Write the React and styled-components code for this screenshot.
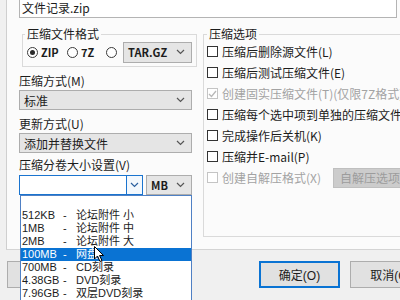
import React from "react";
import styled, { createGlobalStyle } from "styled-components";

const Global = createGlobalStyle`
  html, body { margin: 0; padding: 0; background: #f0f0f0; }
  body { font-family: "Noto Sans CJK SC", "Noto Sans", sans-serif; font-size: 12px; color: #1c1c1c; }
  * { box-sizing: border-box; }
`;

const Root = styled.div`
  width: 400px;
  height: 300px;
  overflow: hidden;
  background: #f0f0f0;
  display: flex;
  flex-direction: column;
`;

const Page = styled.div`
  margin-left: 6px;
  height: 250px;
  flex: none;
  background: #fbfbfb;
  border-left: 1px solid #cfcfcf;
  border-bottom: 1px solid #d4d4d4;
  padding: 0 3px 0 12px;
  display: flex;
  flex-direction: column;
`;

const NameField = styled.div`
  height: 18px;
  background: #fff;
  border: 1px solid #b4b4b4;
  border-top: none;
  padding-left: 2px;
  line-height: 16px;
  white-space: nowrap;
`;

const Columns = styled.div`
  margin-top: 9px;
  display: flex;
  gap: 6px;
`;

const LeftCol = styled.div`
  position: relative;
  width: 178px;
  flex: none;
  display: flex;
  flex-direction: column;
`;

const Group = styled.fieldset`
  margin: 0 0 0 ${(p) => p.$indent || 0}px;
  padding: 0 0 ${(p) => p.$pb || 0}px 2px;
  border: 1px solid #dadada;
  min-width: 0;
  width: ${(p) => p.$w}px;
  height: ${(p) => (p.$h ? p.$h + "px" : "auto")};
  flex: none;
`;

const Legend = styled.legend`
  padding: 0 2px;
  margin: 0;
  line-height: 14px;
  height: 14px;
  font-size: 12px;
  white-space: nowrap;
`;

const RadioRow = styled.div`
  height: 22px;
  display: flex;
  align-items: center;
  padding-left: 2px;
`;

const RadioOption = styled.div`
  width: ${(p) => p.$w}px;
  flex: none;
  display: flex;
  align-items: center;
  gap: 3px;
  white-space: nowrap;
  font-weight: 600;
  font-size: 11px;
`;

const RadioDot = styled.span`
  width: 11px;
  height: 11px;
  border-radius: 50%;
  border: 1px solid #3a3a3a;
  background: #fff;
  display: inline-flex;
  align-items: center;
  justify-content: center;
  flex: none;
  &::after {
    content: "";
    width: 5px;
    height: 5px;
    border-radius: 50%;
    background: ${(p) => (p.$on ? "#2a2a2a" : "transparent")};
  }
`;

const Select = styled.div`
  height: ${(p) => p.$h || 20}px;
  width: ${(p) => p.$w}px;
  flex: none;
  margin-top: ${(p) => p.$mt || 0}px;
  background: #e5e5e5;
  border: 1px solid #adadad;
  display: flex;
  align-items: center;
  justify-content: space-between;
  padding: 0 6px 0 4px;
  white-space: nowrap;
  font-weight: ${(p) => (p.$bold ? 600 : 400)};
  font-size: ${(p) => (p.$bold ? 11 : 12)}px;
`;

const FieldLabel = styled.div`
  margin-top: ${(p) => p.$mt || 7}px;
  height: 14px;
  line-height: 14px;
  white-space: nowrap;
`;

const SplitRow = styled.div`
  margin-top: 3px;
  display: flex;
  gap: 3px;
  height: 20px;
`;

const EditCombo = styled.div`
  width: 124px;
  background: #fff;
  border: 1px solid #1a74cf;
  display: flex;
  justify-content: flex-end;
`;

const ComboButton = styled.div`
  width: 16px;
  border-left: 1px solid #1a74cf;
  background: #f3f8fd;
  display: flex;
  align-items: center;
  justify-content: center;
`;

const DropList = styled.div`
  position: absolute;
  left: 1px;
  top: 168px;
  width: 172px;
  height: 130px;
  background: #fff;
  border: 1px solid #4f80c4;
  z-index: 3;
`;

const DropItem = styled.div`
  height: 13px;
  line-height: 13px;
  display: flex;
  padding-left: 1px;
  white-space: nowrap;
  overflow: hidden;
  font-family: "Liberation Sans", "Noto Sans CJK SC", sans-serif;
  font-size: 11px;
  background: ${(p) => (p.$sel ? "#0a73d3" : "transparent")};
  color: ${(p) => (p.$sel ? "#fff" : "#1c1c1c")};
`;

const SizeCell = styled.span`
  width: 41px;
  flex: none;
`;

const DashCell = styled.span`
  width: 13px;
  flex: none;
`;

const Cursor = styled.svg`
  position: absolute;
  left: 73px;
  top: 50px;
`;

const OptionsGroup = styled(Group)`
  padding-left: 3px;
`;

const CheckRow = styled.div`
  height: 21px;
  display: flex;
  align-items: center;
  gap: 4px;
  white-space: nowrap;
  color: ${(p) => (p.$off ? "#a3a3a3" : "#1c1c1c")};
`;

const Box = styled.span`
  width: 11px;
  height: 11px;
  flex: none;
  border: 1px solid ${(p) => (p.$off ? "#c4c4c4" : "#333")};
  background: #fff;
  display: inline-flex;
  align-items: center;
  justify-content: center;
`;

const SfxButton = styled.div`
  margin-left: 8px;
  height: 20px;
  padding: 0 6px;
  background: #cccccc;
  border: 1px solid #bfbfbf;
  color: #9c9c9c;
  line-height: 18px;
`;

const Footer = styled.div`
  flex: 1;
  display: flex;
  padding: 11px 0 0 7px;
`;

const Button = styled.div`
  width: ${(p) => p.$w || 81}px;
  height: 27px;
  flex: none;
  background: #e1e1e1;
  border: ${(p) => (p.$focus ? "2px solid #0a73d3" : "1px solid #adadad")};
  display: flex;
  align-items: center;
  justify-content: center;
  white-space: nowrap;
  font-family: "Liberation Sans", "Noto Sans CJK SC", sans-serif;
  font-size: 12px;
`;

const ButtonGroup = styled.div`
  margin-left: auto;
  margin-right: -31px;
  display: flex;
  gap: 10px;
`;

const Chevron = ({ color = "#555" }) => (
  <svg width="9" height="6" viewBox="0 0 9 6">
    <polyline points="1,1 4.5,4.5 8,1" fill="none" stroke={color} strokeWidth="1.2" />
  </svg>
);

const Check = () => (
  <svg width="9" height="8" viewBox="0 0 9 8">
    <polyline points="1,4 3.5,6.5 8,1" fill="none" stroke="#b8b8b8" strokeWidth="1.3" />
  </svg>
);

const sizes = [
  ["", "", ""],
  ["512KB", "-", "论坛附件 小"],
  ["1MB", "-", "论坛附件 中"],
  ["2MB", "-", "论坛附件 大"],
  ["100MB", "-", "网盘"],
  ["700MB", "-", "CD刻录"],
  ["4.38GB", "-", "DVD刻录"],
  ["7.96GB", "-", "双层DVD刻录"],
];

const options = [
  { t: "压缩后删除源文件(L)" },
  { t: "压缩后测试压缩文件(E)" },
  { t: "创建固实压缩文件(T)(仅限7Z格式)", off: true, on: true },
  { t: "压缩每个选中项到单独的压缩文件(A)" },
  { t: "完成操作后关机(K)" },
  { t: "压缩并E-mail(P)" },
];

export default function App() {
  return (
    <Root>
      <Global />
      <Page>
        <NameField>文件记录.zip</NameField>
        <Columns>
          <LeftCol>
            <Group $indent={3} $w={175} $pb={3}>
              <Legend>压缩文件格式</Legend>
              <RadioRow>
                <RadioOption $w={40}>
                  <RadioDot $on />ZIP
                </RadioOption>
                <RadioOption $w={39}>
                  <RadioDot />7Z
                </RadioOption>
                <RadioOption $w={17}>
                  <RadioDot />
                </RadioOption>
                <Select $w={69} $h={21} $bold>
                  TAR.GZ
                  <Chevron />
                </Select>
              </RadioRow>
            </Group>
            <FieldLabel>压缩方式(M)</FieldLabel>
            <Select $w={173} $mt={2}>
              标准
              <Chevron />
            </Select>
            <FieldLabel>更新方式(U)</FieldLabel>
            <Select $w={173} $mt={2}>
              添加并替换文件
              <Chevron />
            </Select>
            <FieldLabel $mt={5}>压缩分卷大小设置(V)</FieldLabel>
            <SplitRow>
              <EditCombo>
                <ComboButton>
                  <Chevron color="#2a5f9e" />
                </ComboButton>
              </EditCombo>
              <Select $w={46} $bold>
                MB
                <Chevron />
              </Select>
            </SplitRow>
            <DropList>
              {sizes.map(([s, d, n], i) => (
                <DropItem key={i} $sel={i === 4}>
                  <SizeCell>{s}</SizeCell>
                  <DashCell>{d}</DashCell>
                  <span>{n}</span>
                </DropItem>
              ))}
              <Cursor width="11" height="17" viewBox="0 0 11 17">
                <path d="M0.5 0.5 L0.5 13 L3.5 10 L6 15.5 L8 14.5 L5.5 9.5 L9.5 9.5 Z" fill="#fff" stroke="#000" strokeWidth="1" />
              </Cursor>
            </DropList>
          </LeftCol>
          <OptionsGroup $w={230} $h={210}>
            <Legend>压缩选项</Legend>
            {options.map((o, i) => (
              <CheckRow key={i} $off={o.off}>
                <Box $off={o.off}>{o.on && <Check />}</Box>
                {o.t}
              </CheckRow>
            ))}
            <CheckRow $off>
              <Box $off />
              创建自解压格式(X)
              <SfxButton>自解压选项(S)...</SfxButton>
            </CheckRow>
          </OptionsGroup>
        </Columns>
      </Page>
      <Footer>
        <Button $w={80}>配置(F)...</Button>
        <ButtonGroup>
          <Button $focus>确定(O)</Button>
          <Button>取消(C)</Button>
        </ButtonGroup>
      </Footer>
    </Root>
  );
}
